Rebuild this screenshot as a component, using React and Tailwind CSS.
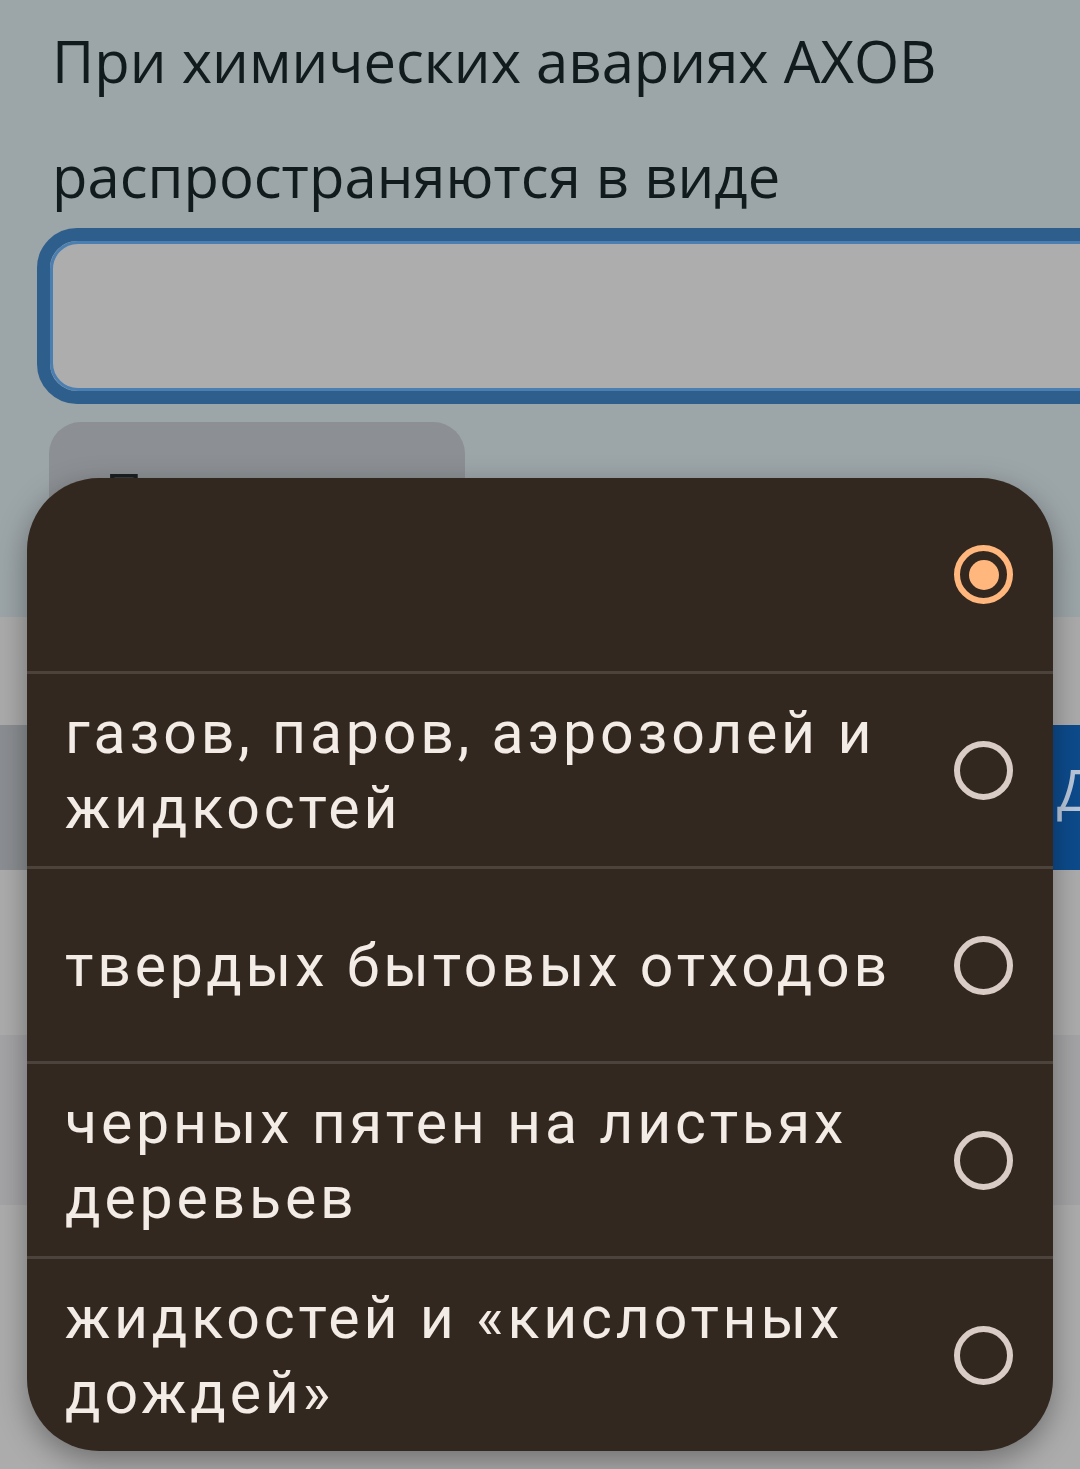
const options = [
  { id: 0, label: "", checked: true },
  { id: 1, label: "газов, паров, аэрозолей и жидкостей" },
  { id: 2, label: "твердых бытовых отходов" },
  { id: 3, label: "черных пятен на листьях деревьев" },
  { id: 4, label: "жидкостей и «кислотных дождей»" },
];

function Radio({ checked }) {
  if (checked) {
    return (
      <span className="flex h-[59px] w-[59px] shrink-0 items-center justify-center rounded-full border-[6px] border-[#ffb77d]">
        <span className="h-[30px] w-[30px] rounded-full bg-[#ffb77d]" />
      </span>
    );
  }
  return <span className="h-[59px] w-[59px] shrink-0 rounded-full border-[6px] border-[#d9ccc6]" />;
}

export default function App() {
  return (
    <div className="relative h-[1469px] w-[1080px] overflow-hidden bg-[#acacac] font-['Open_Sans',sans-serif]">
      {/* QUESTION */}
      <div className="h-[617px] bg-[#9ca5a8] pl-[52px] pt-[3px]">
        <p className="w-[1000px] text-[58px] leading-[115px] text-[#111b1d]">
          При химических авариях АХОВ распространяются в виде
        </p>

        <div className="-ml-[15px] -mt-[5px] w-[1100px] rounded-[40px] border-[13px] border-[#2e5f8c]">
          <div className="h-[150px] rounded-[28px] border-[3px] border-[#4b7fb2] bg-[#adadad]" />
        </div>

        <div className="-ml-[3px] mt-[18px] h-[140px] w-[416px] rounded-[32px] bg-[#8c8f93] pl-[56px] pt-[30px] text-[52px] leading-[78px] text-[#1b1f22]">
          Проверить
        </div>
      </div>

      {/* BOTTOM BUTTONS */}
      <div className="h-[108px] bg-[#ababab]" />
      <div className="flex h-[145px]">
        <div className="flex-1 bg-[#8b8e92]" />
        <div className="w-[300px] overflow-hidden whitespace-nowrap bg-[#0d4b8c] pl-[277px] pt-[36px] text-[56px] leading-none text-[#b9c7da]">
          Далее
        </div>
      </div>
      <div className="h-[165px] bg-[#acacac]" />
      <div className="h-[170px] bg-[#a4a4a6]" />

      {/* SELECT DIALOG */}
      <div className="absolute left-[27px] top-[478px] w-[1026px] overflow-hidden rounded-[72px] bg-[#33281f] font-['Roboto',sans-serif] shadow-[0_10px_30px_rgba(0,0,0,0.35)]">
        {options.map((o, i) => (
          <div
            key={o.id}
            className={`flex items-center justify-between pl-[38px] pr-[40px] ${
              i === 0 ? "h-[193px]" : "h-[195px] border-t-[3px] border-[#4c433c]"
            }`}
          >
            <span className="w-[870px] text-[59px] leading-[75px] tracking-[3.8px] text-[#f3ebe6]">{o.label}</span>
            <Radio checked={o.checked} />
          </div>
        ))}
      </div>
    </div>
  );
}
